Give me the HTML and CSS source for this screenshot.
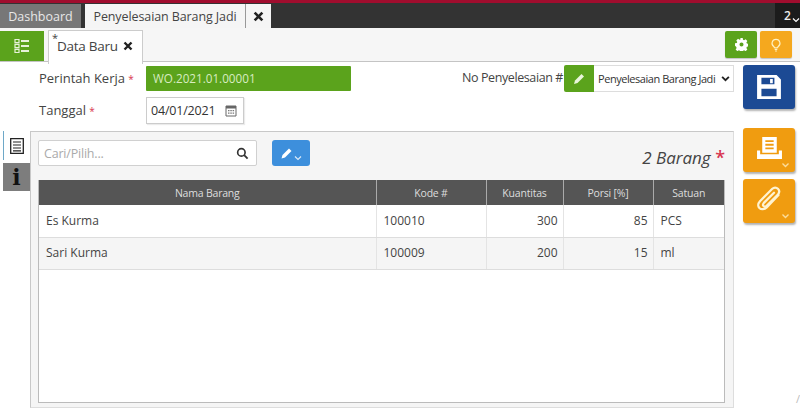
FILE: index.html
```html
<!DOCTYPE html>
<html lang="id">
<head>
<meta charset="utf-8">
<title>Penyelesaian Barang Jadi</title>
<link rel="stylesheet" href="styles.css">
</head>
<body>
<header class="topbar">
  <div class="tab tab-dash">Dashboard</div>
  <div class="tab tab-doc">Penyelesaian Barang Jadi</div>
  <div class="tab tab-close"><svg class="x" viewBox="0 0 10 10"><path d="M1.5 1.5l7 7M8.5 1.5l-7 7"/></svg></div>
  <div class="counter">2 <svg class="chev-w" viewBox="0 0 8 6"><path d="M1 1.5l3 3 3-3"/></svg></div>
</header>
<div class="toolbar">
  <button class="list-btn" aria-label="Daftar">
    <svg viewBox="0 0 16 16" class="ico16"><path d="M1 1.5h4v3.2H1zM1 6.4h4v3.2H1zM1 11.3h4v3.2H1z" fill="none" stroke="#e6f2d8" stroke-width="1.2"/><path d="M7 2h8v2H7zM7 7h8v2H7zM7 12h8v2H7z" fill="#e6f2d8"/></svg>
  </button>
  <div class="data-tab"><span class="mark">*</span><span class="data-text">Data Baru</span><svg class="x x-small" viewBox="0 0 10 10"><path d="M1.5 1.5l7 7M8.5 1.5l-7 7"/></svg></div>
  <div class="spacer"></div>
  <button class="tool tool-green" aria-label="Pengaturan">
    <svg viewBox="0 0 16 16" class="ico12"><path fill="#fff" fill-rule="evenodd" d="M6.5 0h3l.4 2.2 1.3.6L13.1 1.6l2.1 2.1-1.200 1.900.6 1.300 2.400.5v3l-2.400.5-.6 1.300 1.200 1.900-2.100 2.100-1.900-1.200-1.300.6-.4 2.200h-3l-.4-2.200-1.300-.6-1.900 1.200-2.100-2.100 1.200-1.900-.6-1.300L0 9.500v-3l2.200-.4.6-1.300L1.600 3 3.700.9l1.900 1.200 1.300-.6zM8 5.500a2.500 2.500 0 100 5 2.500 2.500 0 000-5z"/></svg>
  </button>
  <button class="tool tool-orange" aria-label="Petunjuk">
    <svg viewBox="0 0 16 16" class="ico14"><path fill="none" stroke="#fff3c4" stroke-width="1.300" d="M8 1.500a4.500 4.500 0 00-2.600 8.200c.5.400.8 1 .8 1.500h3.600c0-.5.300-1.100.8-1.500A4.500 4.500 0 008 1.500zM6.500 13h3M7 14.800h2"/></svg>
  </button>
</div>
<div class="content">
  <main class="main">
    <section class="form">
      <div class="row">
        <label class="label">Perintah Kerja <span class="req">*</span></label>
        <div class="wo">WO.2021.01.00001</div>
        <div class="no-group">
          <span class="no-label">No Penyelesaian #</span>
          <button class="edit-green" aria-label="Ubah">
            <svg viewBox="0 0 14 14" class="ico14"><path d="M2 12l1-3.500 6.500-6.500 2.500 2.500-6.500 6.500z" fill="#e9f5da"/></svg>
          </button>
          <div class="select"><span class="select-text">Penyelesaian Barang Jadi</span><svg class="chev-d" viewBox="0 0 8 6"><path d="M1 1.500l3 3 3-3"/></svg></div>
        </div>
      </div>
      <div class="row row-date">
        <label class="label">Tanggal <span class="req">*</span></label>
        <div class="date">04/01/2021
          <svg viewBox="0 0 12 12" class="ico-cal"><path d="M1 1h10v10H1z" fill="none" stroke="#666"/><path d="M1 1h10v2.500H1z" fill="#666"/><path d="M3 5h1.500v1.200H3zM5.300 5h1.500v1.200H5.300zM7.600 5h1.500v1.200H7.600zM3 7.500h1.500v1.200H3zM5.300 7.500h1.500v1.200H5.300zM7.600 7.500h1.500v1.200H7.600z" fill="#777"/></svg>
        </div>
      </div>
    </section>
    <section class="work">
      <nav class="sidetabs">
        <div class="side side-active">
          <svg viewBox="0 0 14 16" class="ico-doc"><path d="M.7.700h12.600v14.600H.7z" fill="none" stroke="#222" stroke-width="1.300"/><path d="M3 4h8M3 7h8M3 10h8M3 12.800h8" stroke="#222" stroke-width="1.200"/></svg>
        </div>
        <div class="side side-info"><span class="info-i">i</span></div>
      </nav>
      <div class="panel">
        <div class="panel-head">
          <div class="search">
            <span class="placeholder">Cari/Pilih...</span>
            <svg viewBox="0 0 14 14" class="ico-search"><circle cx="5.800" cy="5.800" r="4" fill="none" stroke="#333" stroke-width="1.800"/><path d="M8.800 8.800l3.700 3.700" stroke="#333" stroke-width="2"/></svg>
          </div>
          <button class="edit-blue" aria-label="Ubah">
            <svg viewBox="0 0 14 14" class="ico14"><path d="M1.500 12.500l1-3.500 6.500-6.500 2.500 2.500-6.500 6.500z" fill="#fff"/></svg>
            <svg class="chev-w chev-blue" viewBox="0 0 8 6"><path d="M1 1.500l3 3 3-3"/></svg>
          </button>
          <div class="count">2 Barang <span class="req req-big">*</span></div>
        </div>
        <div class="table-wrap">
          <table class="grid">
            <thead>
              <tr><th class="c1">Nama Barang</th><th class="c2">Kode #</th><th class="c3">Kuantitas</th><th class="c4">Porsi [%]</th><th class="c5">Satuan</th></tr>
            </thead>
            <tbody>
              <tr><td>Es Kurma</td><td>100010</td><td class="num">300</td><td class="num">85</td><td>PCS</td></tr>
              <tr class="alt"><td>Sari Kurma</td><td>100009</td><td class="num">200</td><td class="num">15</td><td>ml</td></tr>
            </tbody>
          </table>
        </div>
      </div>
    </section>
  </main>
  <aside class="actions">
    <button class="act act-save" aria-label="Simpan">
      <svg viewBox="0 0 24 24" class="ico-save"><path fill="#fff" fill-rule="evenodd" d="M1 1h18l4 4v18H1zM5 3.500v6h12v-6zM13 4.500h2.500v4H13zM5 13.500V20.500h14V13.500z"/></svg>
    </button>
    <button class="act act-print" aria-label="Cetak">
      <svg viewBox="0 0 26 24" class="ico-print"><path fill="#fff" fill-rule="evenodd" d="M6 1h14v15H6zM9 4v1.800h8V4zM9 7.500v1.800h8V7.500zM9 11v1.800h8V11z"/><path fill="#fff" d="M1 14h3v3.500h18V14h3v8H1z"/></svg>
      <svg class="chev-l" viewBox="0 0 8 6"><path d="M1 1.500l3 3 3-3"/></svg>
    </button>
    <button class="act act-clip" aria-label="Lampiran">
      <svg viewBox="0 0 24 24" class="ico-clip"><path fill="none" stroke="#fff3d0" stroke-width="2" stroke-linecap="round" d="M20 8L9.500 19c-2 2-5 2-6.500.500s-1.300-4 .5-6L14.500 2.500c1.500-1.500 3.500-1.500 5 0s1.300 3.500 0 5L9.500 17.500c-1 1-2 1-2.800.300s-.500-1.800.300-2.800l9-9"/></svg>
      <svg class="chev-l" viewBox="0 0 8 6"><path d="M1 1.500l3 3 3-3"/></svg>
    </button>
  </aside>
</div>
<span class="edge-mark">/</span>
</body>
</html>
```
FILE: styles.css
```css
* { box-sizing: border-box; }
html, body { margin: 0; padding: 0; }
body {
  width: 800px;
  height: 410px;
  overflow: hidden;
  position: relative;
  background: #fff;
  color: #333;
  font-family: "Open Sans", "Liberation Sans", sans-serif;
  font-size: 13px;
}
button { border: 0; padding: 0; margin: 0; font: inherit; }
svg { display: block; }

/* top bar */
.topbar {
  height: 28px;
  display: flex;
  align-items: flex-end;
  background: #333;
  border-top: 3px solid #a00d2e;
}
.tab {
  height: 24px;
  display: flex;
  align-items: center;
  justify-content: center;
  white-space: nowrap;
}
.tab-dash { width: 81px; background: #777; color: #e8e8e8; margin-right: 4px; font-size: 12.5px; }
.tab-doc { width: 161px; background: #f5f5f5; color: #444; font-size: 12.5px; letter-spacing: -.1px; border-right: 1px solid #999; }
.tab-close { width: 25px; background: #f5f5f5; }
.x { width: 11px; height: 11px; fill: none; stroke: #222; stroke-width: 2.400; flex: none; }
.x-small { width: 10px; height: 10px; margin-left: 5px; }
.counter {
  margin-left: auto;
  width: 25px;
  height: 25px;
  background: #1c1c1c;
  color: #eee;
  font-size: 12px;
  font-weight: 600;
  padding-left: 9px;
  display: flex;
  align-items: center;
  gap: 1px;
}
.chev-w { width: 8px; height: 6px; fill: none; stroke: #fff; stroke-width: 1.200; }
.counter .chev-w { margin-top: 8px; }

/* toolbar */
.toolbar {
  height: 34px;
  display: flex;
  align-items: flex-start;
  background: #f6f6f6;
  border-bottom: 1px solid #c4c4c4;
}
.list-btn {
  width: 44px;
  height: 30px;
  margin-top: 3px;
  background: #5ba31c;
  display: flex;
  align-items: center;
  justify-content: center;
}
.ico16 { width: 16px; height: 16px; }
.ico14 { width: 14px; height: 14px; }
.ico12 { width: 13px; height: 13px; }
.data-tab {
  width: 95px;
  height: 34px;
  margin: 2px 0 0 4px;
  padding: 0 0 3px 3px;
  background: #fff;
  border: 1px solid #ccc;
  border-bottom: 0;
  display: flex;
  align-items: center;
  white-space: nowrap;
  color: #444;
  position: relative;
  z-index: 1;
}
.data-text { font-size: 13.5px; letter-spacing: -.25px; }
.mark { align-self: flex-start; font-size: 11px; line-height: 11px; margin-top: 1px; width: 5px; }
.spacer { flex: 1; }
.tool {
  width: 32px;
  height: 27px;
  margin-top: 3px;
  border-radius: 2px;
  display: flex;
  align-items: center;
  justify-content: center;
  box-shadow: 0 1px 1px rgba(0,0,0,.2);
}
.tool-green { background: #5ba31c; margin-right: 3px; }
.tool-orange { background: #f5a81e; margin-right: 8px; }

/* content */
.content { display: flex; padding-top: 3px; }
.main { width: 734px; flex: none; }
.form { padding-left: 39px; }
.row { height: 27px; display: flex; align-items: center; }
.row-date { margin-top: 5px; }
.label { width: 107px; color: #444; font-size: 13px; padding-bottom: 2px; }
.req { color: #d8344f; font-size: 10px; }
.req-big { font-size: 18px; font-style: normal; font-weight: 600; }
.wo {
  width: 205px;
  height: 25px;
  margin-top: -1px;
  background: #5ba31c;
  color: #d8ecc0;
  padding-left: 7px;
  line-height: 25px;
  border-radius: 1px;
  font-size: 11.7px;
}
.no-group { margin-left: auto; display: flex; align-items: center; }
.no-label { color: #444; font-size: 12.5px; letter-spacing: -.4px; margin-right: 1px; white-space: nowrap; padding-bottom: 2px; }
.edit-green {
  width: 30px;
  height: 27px;
  background: #5ba31c;
  display: flex;
  align-items: center;
  justify-content: center;
  border-radius: 2px 0 0 2px;
}
.select {
  width: 140px;
  height: 27px;
  border: 1px solid #ddd;
  border-left: 0;
  background: #fff;
  color: #333;
  padding-left: 4px;
  display: flex;
  align-items: center;
  white-space: nowrap;
}
.select-text { font-size: 11px; letter-spacing: -.45px; }
.chev-d { width: 9px; height: 7px; fill: none; stroke: #222; stroke-width: 1.600; margin-left: 6px; flex: none; }
.date {
  width: 98px;
  height: 27px;
  border: 1px solid #ccc;
  box-shadow: 1px 1px 1px rgba(0,0,0,.08);
  display: flex;
  align-items: center;
  justify-content: space-between;
  padding: 0 6px 0 4px;
  font-size: 12.5px;
  letter-spacing: -.2px;
  color: #333;
}
.ico-cal { width: 12px; height: 12px; }

/* work area */
.work { display: flex; margin-top: 7px; }
.sidetabs { width: 30px; padding-left: 3px; flex: none; }
.side { width: 27px; display: flex; align-items: center; justify-content: center; }
.side-active { height: 29px; background: #fff; border-left: 1px solid #6ea8c8; }
.side-info { height: 28px; margin-top: 3px; background: #7d7d7d; }
.info-i { font-family: "DejaVu Serif", "Liberation Serif", serif; font-weight: 700; font-size: 22px; color: #111; line-height: 1; }
.ico-doc { width: 14px; height: 16px; }
.panel {
  width: 704px;
  height: 277px;
  background: #f5f5f5;
  border: 1px solid #c8c8c8;
  border-right-color: #ddd;
  border-bottom-color: #ddd;
  padding: 8px 8px 4px 7px;
  display: flex;
  flex-direction: column;
}
.panel-head { height: 26px; display: flex; align-items: stretch; }
.search {
  width: 219px;
  background: #fff;
  border: 1px solid #d0d0d0;
  border-radius: 2px;
  padding: 0 7px 0 5px;
  display: flex;
  align-items: center;
  justify-content: space-between;
}
.placeholder { color: #aaa; font-size: 12.5px; letter-spacing: -.2px; }
.ico-search { width: 13px; height: 13px; }
.edit-blue {
  width: 38px;
  margin-left: 15px;
  background: #3d8fdc;
  border-radius: 3px;
  display: flex;
  align-items: center;
  justify-content: center;
}
.chev-blue { margin-top: 9px; stroke: #dbeaf8; }
.count {
  margin-left: auto;
  font-style: italic;
  font-size: 17px;
  color: #444;
  line-height: 34px;
  white-space: nowrap;
}
.table-wrap {
  flex: 1;
  margin-top: 14px;
  background: #fff;
  border: 1px solid #bbb;
  border-top: 0;
  min-height: 0;
}
.grid { width: 100%; border-collapse: collapse; table-layout: fixed; font-size: 12px; }
.grid th {
  height: 25px;
  background: #555;
  color: #ddd;
  font-weight: 400;
  font-size: 10.5px;
  letter-spacing: -.2px;
  border-right: 1px solid #aaa;
  padding: 0;
}
.grid th:last-child { border-right: 0; }
.grid td {
  height: 32px;
  padding: 0 7px;
  color: #444;
  border-right: 1px solid #e4e4e4;
  border-bottom: 1px solid #ddd;
}
.grid td:last-child { border-right: 0; }
.grid .num { text-align: right; padding-right: 5px; }
.grid .alt td { background: #f5f5f5; padding-bottom: 2px; }
.grid .alt .num { padding-right: 5px; }
.c1 { width: 337px; }
.c2 { width: 110px; }
.c3 { width: 77px; }
.c4 { width: 90px; }

/* action column */
.actions { margin-left: 9px; width: 52px; display: flex; flex-direction: column; }
.act {
  position: relative;
  width: 52px;
  height: 44px;
  border-radius: 3px;
  display: flex;
  align-items: center;
  justify-content: center;
  box-shadow: 1px 2px 2px rgba(0,0,0,.3);
}
.act-save { background: #1c4a94; }
.act-print { background: #f09c10; margin-top: 19px; }
.act-clip { background: #f09c10; margin-top: 7px; }
.ico-save { width: 26px; height: 26px; }
.ico-print { width: 27px; height: 25px; margin-bottom: 4px; }
.ico-clip { width: 27px; height: 27px; margin-bottom: 3px; }
.chev-l {
  position: absolute;
  right: 5px;
  bottom: 4px;
  width: 9px;
  height: 6px;
  fill: none;
  stroke: #fbdc9c;
  stroke-width: 1.4;
}
.edge-mark {
  position: absolute;
  left: 796px;
  top: 391px;
  font-size: 11px;
  color: #bbb;
}
```
